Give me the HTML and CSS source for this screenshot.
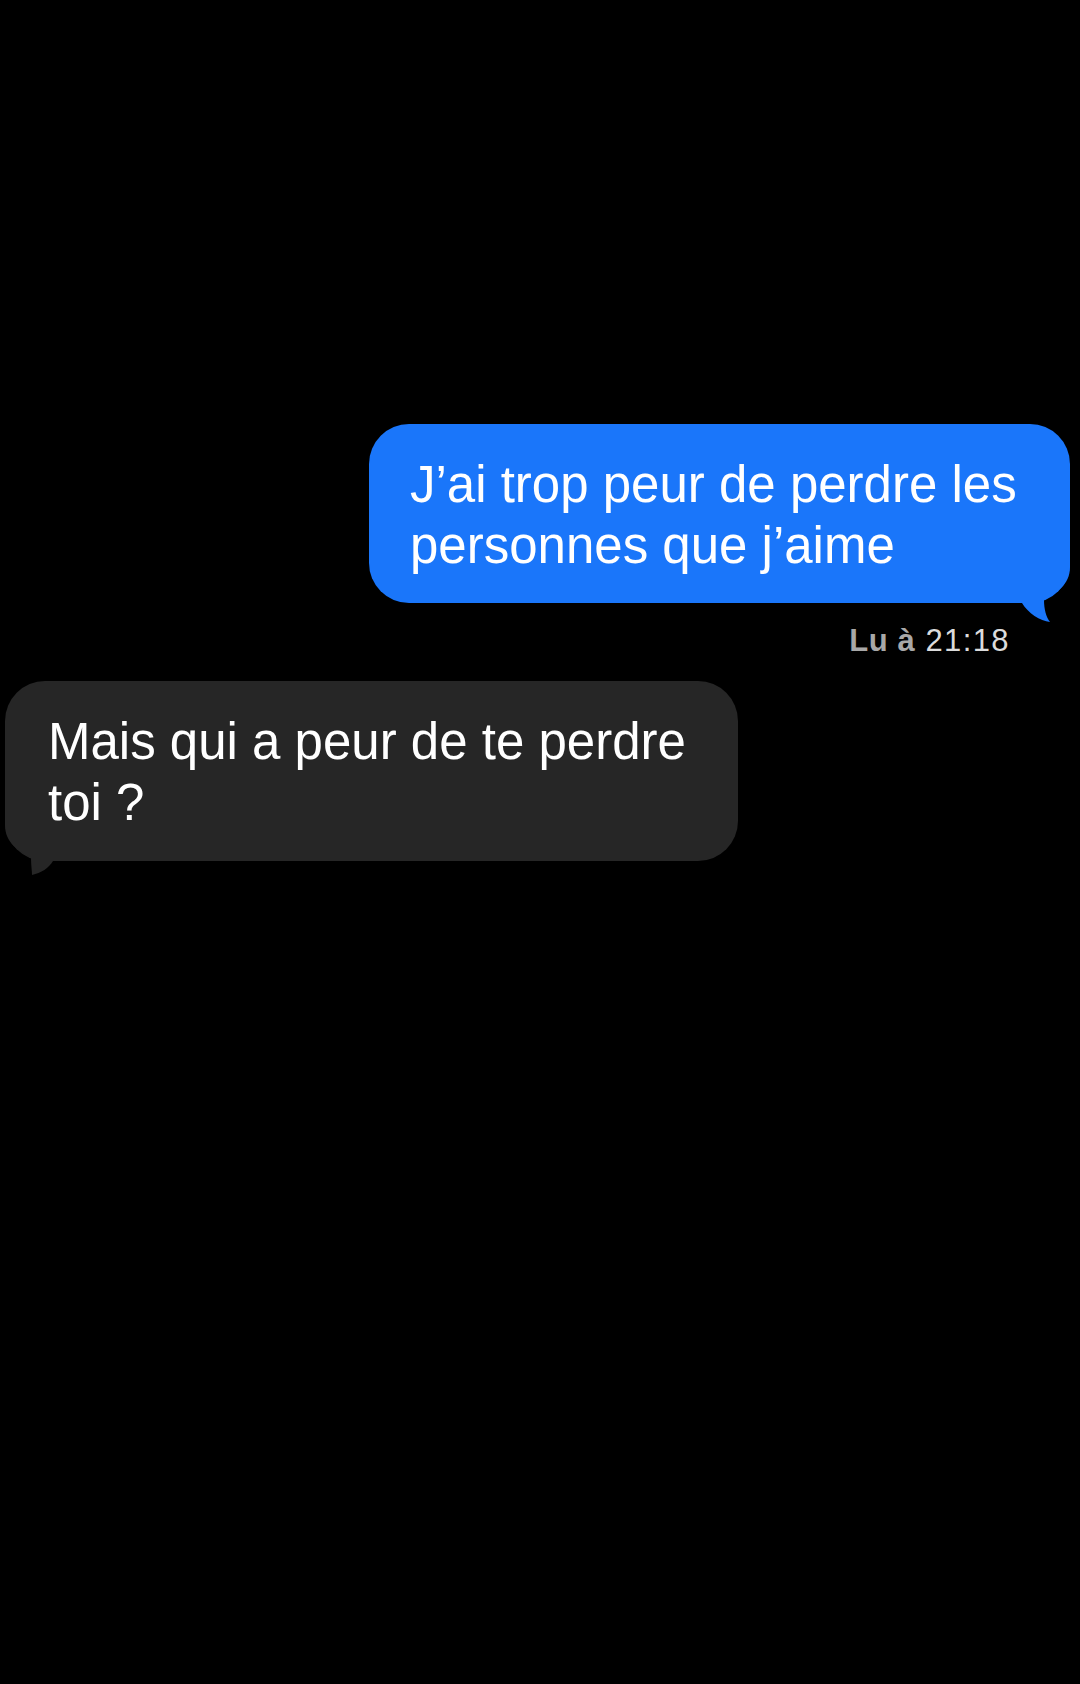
FILE: index.html
```html
<!DOCTYPE html>
<html lang="fr">
<head>
    <meta charset="UTF-8">
    <meta name="viewport" content="width=device-width, initial-scale=1.0">
    <title>Messages</title>
    <link rel="stylesheet" href="styles.css">
</head>
<body>
    <div class="thread">
        <div class="row sent">
            <div class="bubble blue">
                <svg class="tail tail-right" viewBox="0 0 60 70" width="60" height="70">
                    <path d="M0 0 H60 V14 C60 32 46 40 34 47 C34 56 36 64 40 69 C30 68 18 60 12 50 H0 Z" fill="#1a76fa"/>
                </svg>
                <span class="text">J’ai trop peur de perdre les<br>personnes que j’aime</span>
            </div>
        </div>
        <p class="receipt"><b>Lu à</b> 21:18</p>

        <div class="row received">
            <div class="bubble gray">
                <svg class="tail tail-left" viewBox="0 0 60 70" width="60" height="70">
                    <path d="M60 0 H0 V14 C0 32 14 40 26 47 C26 54 27 60 27 64 C36 62 44 57 48 50 H60 Z" fill="#262626"/>
                </svg>
                <span class="text">Mais qui a peur de te perdre<br>toi ?</span>
            </div>
        </div>
    </div>
</body>
</html>
```

FILE: styles.css
```css
body {
    margin: 0;
    padding: 0;
    background: #000;
    font-family: "Liberation Sans", Arial, sans-serif;
    color: #fff;
}
.thread {
    width: 1080px;
    height: 1684px;
    padding-top: 424px;
    box-sizing: border-box;
}
.row {
    display: flex;
}
.sent {
    justify-content: flex-end;
    padding-right: 10px;
}
.received {
    justify-content: flex-start;
    padding-left: 5px;
    margin-top: 22px;
}
.bubble {
    position: relative;
    box-sizing: border-box;
    padding: 30px 40px 27px 41px;
    border-radius: 40px;
    font-size: 51px;
    line-height: 61px;
    white-space: nowrap;
}
.blue {
    width: 701px;
    height: 179px;
    background: #1a76fa;
}
.gray {
    width: 733px;
    height: 180px;
    background: #262626;
    padding-left: 43px;
}
.text {
    position: relative;
}
.tail {
    position: absolute;
    bottom: -20px;
}
.tail-right {
    right: 0;
}
.tail-left {
    left: 0;
}
.receipt {
    margin: 20px 0 0;
    padding-right: 70px;
    text-align: right;
    font-size: 31px;
    line-height: 36px;
    letter-spacing: 1.4px;
    color: #dcdcdc;
}
.receipt b {
    color: #a8a8a8;
    letter-spacing: 0.6px;
}
```
